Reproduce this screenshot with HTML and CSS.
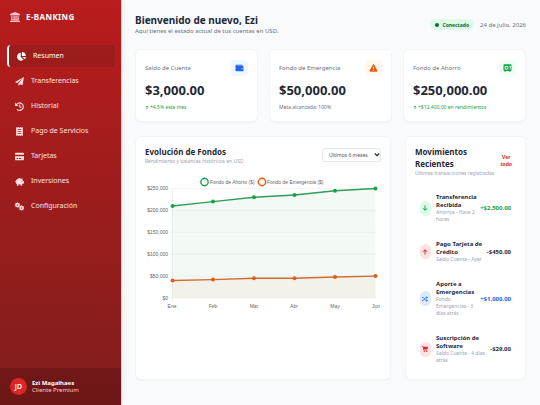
FILE: index.html
```html
<!DOCTYPE html>
<html lang="es">
<head>
<meta charset="utf-8">
<meta name="viewport" content="width=device-width, initial-scale=1">
<title>E-Banking</title>
<link rel="stylesheet" href="styles.css">
</head>
<body>
<div class="app">
  <aside class="sidebar">
    <div class="brand">
      <svg class="brand-icon" viewBox="0 0 24 24"><path d="M12 0 24 5v2.500H0V5zM3 9h3v9h2.500V9h3v9h1.500V9h3v9H18V9h3v9l1.500 1v1.500h-21V19L3 18zM0 21.500h24V24H0z"/></svg>
      <span>E-BANKING</span>
    </div>
    <nav class="nav">
      <a class="nav-link active" href="#"><svg viewBox="0 0 24 24"><path d="M10 2v11l7.500 7.500A10.500 10.500 0 1 1 10 2z"/><path d="M13 0a11 11 0 0 1 10.500 10.500H13z"/><path d="M14 13h10a11 11 0 0 1-3.500 6.500z"/></svg>Resumen</a>
      <a class="nav-link" href="#"><svg viewBox="0 0 24 24"><path d="M24 0 20 22l-7-3-4 5v-7L20 4 6 16l-6-3z"/></svg>Transferencias</a>
      <a class="nav-link" href="#"><svg viewBox="0 0 24 24"><path class="stroke" d="M3.500 7A10 10 0 1 1 5 19.500M12.500 6.500v6l4 3"/><path d="M0 1v9.500h9.500z"/></svg>Historial</a>
      <a class="nav-link" href="#"><svg viewBox="0 0 24 24"><path fill-rule="evenodd" d="M3 0l3 2 3-2 3 2 3-2 3 2 3-2v24l-3-2-3 2-3-2-3 2-3-2-3 2zM7 6v2h10V6zm0 5v2h10v-2zm0 5v2h10v-2z"/></svg>Pago de Servicios</a>
      <a class="nav-link" href="#"><svg viewBox="0 0 24 24"><path fill-rule="evenodd" d="M2 2h20a2 2 0 0 1 2 2v3H0V4a2 2 0 0 1 2-2zM0 11h24v9a2 2 0 0 1-2 2H2a2 2 0 0 1-2-2zm4 5v2.500h4V16zm6 0v2.500h7V16z"/></svg>Tarjetas</a>
      <a class="nav-link" href="#"><svg viewBox="0 0 24 24"><path fill-rule="evenodd" d="M8 5a4.500 4.500 0 0 1 8 0l4-2v5l2 3h2v6h-3l-2 2v4h-4v-3H9v3H5v-4c-2-1-3-3-3-5-1 0-2-1-2-3h2c1-4 3-6 6-6zM17 10v2h2v-2z"/></svg>Inversiones</a>
      <a class="nav-link" href="#"><svg viewBox="0 0 24 24"><circle class="gear" cx="6.500" cy="8" r="4"/><circle class="gear-teeth" cx="6.500" cy="8" r="6"/><circle class="gear" cx="17.500" cy="16" r="4"/><circle class="gear-teeth" cx="17.500" cy="16" r="6"/></svg>Configuración</a>
    </nav>
    <div class="profile">
      <span class="avatar">JD</span>
      <div><div class="profile-name">Ezi Magalhaes</div><div class="profile-plan">Cliente Premium</div></div>
    </div>
  </aside>

  <main class="main">
    <header class="page-head">
      <div><h1>Bienvenido de nuevo, Ezi</h1><p>Aquí tienes el estado actual de tus cuentas en USD.</p></div>
      <div class="head-status"><span class="pill"><i class="dot"></i>Conectado</span><time datetime="2026-07-24">24 de julio, 2026</time></div>
    </header>

    <section class="stats">
      <article class="card stat">
        <div class="stat-top"><h2>Saldo de Cuenta</h2><span class="stat-icon blue"><svg viewBox="0 0 24 24"><path fill-rule="evenodd" d="M3 2h18v3H4v1h18a2 2 0 0 1 2 2v12a2 2 0 0 1-2 2H3a3 3 0 0 1-3-3V5a3 3 0 0 1 3-3zm15 10.500v3h3v-3z"/></svg></span></div>
        <div class="amount">$3,000.00</div>
        <div class="note up"><svg viewBox="0 0 24 24"><path d="M12 23V3M4 11l8-8 8 8"/></svg>+4.5% este mes</div>
      </article>
      <article class="card stat">
        <div class="stat-top"><h2>Fondo de Emergencia</h2><span class="stat-icon orange"><svg viewBox="0 0 24 24"><path fill-rule="evenodd" d="M12 1c1 0 1.500.5 2 1.500l9.500 17c1 2-.5 3.500-2 3.500h-19C1 23-.5 21.500.5 19.500l9.500-17C10.500 1.500 11 1 12 1zm-1.500 7v7h3V8zm0 9v3h3v-3z"/></svg></span></div>
        <div class="amount">$50,000.00</div>
        <div class="note">Meta alcanzada: 100%</div>
      </article>
      <article class="card stat">
        <div class="stat-top"><h2>Fondo de Ahorro</h2><span class="stat-icon green"><svg viewBox="0 0 24 24"><path fill-rule="evenodd" d="M2 1h20a2 2 0 0 1 2 2v16a2 2 0 0 1-2 2h-1v2h-4v-2H7v2H3v-2H2a2 2 0 0 1-2-2V3a2 2 0 0 1 2-2zm7 4a6 6 0 1 0 0 12A6 6 0 0 0 9 5zm0 3a3 3 0 1 1 0 6 3 3 0 0 1 0-6zm9-3v5h1v7h2v-7h1V5z"/></svg></span></div>
        <div class="amount">$250,000.00</div>
        <div class="note up"><svg viewBox="0 0 24 24"><path d="M12 23V3M4 11l8-8 8 8"/></svg>+$12,400.00 en rendimientos</div>
      </article>
    </section>

    <section class="panels">
      <article class="card chart-card">
        <div class="panel-head">
          <div><h2>Evolución de Fondos</h2><p>Rendimiento y balances históricos en USD</p></div>
          <div class="period"><select aria-label="Periodo"><option>Últimos 6 meses</option><option>Último año</option></select><svg viewBox="0 0 8 8"><path d="M1 2l3 3 3-3"/></svg></div>
        </div>
        <svg class="chart" viewBox="0 0 236 136" role="img" aria-label="Evolución de fondos">
          <g class="grid"><path d="M24 11.500H231M24 33.400H231M24 55.300H231M24 77.200H231M24 99.100H231M24 121H231"/><path class="axis" d="M27.500 11.500V124"/></g>
          <path class="area-green" d="M27.500 29 68 24.600 109 20.300 149.500 18 190 13.700 230.500 11.500V121H27.500z"/>
          <path class="area-orange" d="M27.500 103.500 68 102.600 109 101.300H149.500L190 100 230.500 99.100V121H27.500z"/>
          <path class="line green-line" d="M27.500 29 68 24.600 109 20.300 149.500 18 190 13.700 230.500 11.500"/>
          <path class="line orange-line" d="M27.500 103.500 68 102.600 109 101.300H149.500L190 100 230.500 99.100"/>
          <g class="green-dots"><circle cx="27.500" cy="29" r="2"/><circle cx="68" cy="24.600" r="2"/><circle cx="109" cy="20.300" r="2"/><circle cx="149.500" cy="18" r="2"/><circle cx="190" cy="13.700" r="2"/><circle cx="230.500" cy="11.500" r="2"/></g>
          <g class="orange-dots"><circle cx="27.500" cy="103.500" r="2"/><circle cx="68" cy="102.600" r="2"/><circle cx="109" cy="101.300" r="2"/><circle cx="149.500" cy="101.300" r="2"/><circle cx="190" cy="100" r="2"/><circle cx="230.500" cy="99.100" r="2"/></g>
          <circle class="key key-green" cx="59.500" cy="5" r="3.700"/><circle class="key key-orange" cx="117" cy="5" r="3.700"/>
          <text x="65" y="7">Fondo de Ahorro ($)</text><text x="122" y="7">Fondo de Emergencia ($)</text>
          <g class="y-labels"><text x="23" y="13">$250,000</text><text x="23" y="35">$200,000</text><text x="23" y="57">$150,000</text><text x="23" y="79">$100,000</text><text x="23" y="101">$50,000</text><text x="23" y="123">$0</text></g>
          <g class="x-labels"><text x="27" y="131">Ene</text><text x="68" y="131">Feb</text><text x="109" y="131">Mar</text><text x="149" y="131">Abr</text><text x="190" y="131">May</text><text x="231" y="131">Jun</text></g>
        </svg>
      </article>

      <article class="card moves-card">
        <div class="panel-head">
          <div><h2>Movimientos<br>Recientes</h2><p>Últimas transacciones registradas</p></div>
          <button class="see-all" type="button">Ver<br>todo</button>
        </div>
        <ul class="moves">
          <li><span class="move-icon green"><svg viewBox="0 0 24 24"><path class="arrow" d="M12 2v19M4 13l8 8 8-8"/></svg></span><div class="move-text"><h3>Transferencia<br>Recibida</h3><p>Ahorros - Hace 2<br>horas</p></div><span class="move-sum in">+$2,500.00</span></li>
          <li><span class="move-icon red"><svg viewBox="0 0 24 24"><path class="arrow" d="M12 22V3M4 11l8-8 8 8"/></svg></span><div class="move-text"><h3>Pago Tarjeta de<br>Crédito</h3><p>Saldo Cuenta - Ayer</p></div><span class="move-sum">-$450.00</span></li>
          <li><span class="move-icon blue"><svg viewBox="0 0 24 24"><path class="arrow thin" d="M0 6h5l10 12h7M0 18h5l10-12h7M18 2l4 4-4 4M18 14l4 4-4 4"/></svg></span><div class="move-text"><h3>Aporte a<br>Emergencias</h3><p>Fondo<br>Emergencias - 3<br>días atrás</p></div><span class="move-sum transfer">+$1,000.00</span></li>
          <li><span class="move-icon red"><svg viewBox="0 0 24 24"><path d="M0 1h5l1 2h18l-3 11H8l.5 2H21v2H6L3.500 3.500H0z"/><circle cx="9" cy="21" r="2.500"/><circle cx="18.500" cy="21" r="2.500"/></svg></span><div class="move-text"><h3>Suscripción de<br>Software</h3><p>Saldo Cuenta - 4 días<br>atrás</p></div><span class="move-sum">-$29.00</span></li>
        </ul>
      </article>
    </section>
  </main>
</div>
</body>
</html>
```
FILE: styles.css
```css
* { box-sizing: border-box; }
body { margin: 0; font-family: "Noto Sans", "Liberation Sans", sans-serif; font-size: 6px; line-height: 8px; color: #1f2937; background: #f8fafc; }
h1, h2, h3, p, ul { margin: 0; padding: 0; }
svg { display: block; flex: none; fill: currentColor; }

.app { display: flex; min-height: 100vh; }

.sidebar { flex: none; width: 122px; display: flex; flex-direction: column; color: #fff; background: linear-gradient(#b91c1c, #7f1d1d); border-right: 1px solid #e5c5c8; box-shadow: 0 0 6px rgba(0, 0, 0, .08); }
.brand { display: flex; align-items: center; gap: 6px; height: 34px; padding: 0 10px; font-size: 8px; font-weight: 700; letter-spacing: 0.05em; }
.brand-icon { width: 10px; height: 10px; color: #fecaca; }
.nav { display: flex; flex-direction: column; gap: 3px; padding: 11px 6px 0 7px; }
.nav-link { display: flex; align-items: center; gap: 7px; height: 22px; padding: 0 8px; border-radius: 4px; font-size: 7px; color: #fee2e2; text-decoration: none; }
.nav-link svg { width: 9px; height: 9px; }
.nav-link.active { color: #fff; background: rgba(127, 29, 29, .4); border-left: 2px solid #fff; }
.stroke { fill: none; stroke: currentColor; stroke-width: 3; }
.gear { fill: none; stroke: currentColor; stroke-width: 4; }
.gear-teeth { fill: none; stroke: currentColor; stroke-width: 2; stroke-dasharray: 3 3; }
.profile { margin-top: auto; display: flex; align-items: center; gap: 5px; height: 37px; padding: 0 10px; background: rgba(69, 10, 10, .3); }
.avatar { width: 17px; height: 17px; border-radius: 50%; background: #dc2626; font-size: 7px; line-height: 17px; text-align: center; font-weight: 600; }
.profile-name { font-weight: 700; }
.profile-plan { line-height: 7px; color: #fecaca; }

.main { flex: 1; min-width: 0; padding: 14px 14px 14px 13px; }
.page-head { display: flex; align-items: center; justify-content: space-between; margin-bottom: 14px; }
.page-head h1 { font-size: 10px; line-height: 13px; font-weight: 700; }
.page-head p { color: #6b7280; }
.head-status { display: flex; align-items: center; gap: 6px; color: #6b7280; }
.pill { display: flex; align-items: center; gap: 3px; height: 11px; padding: 0 5px; border-radius: 6px; background: #dcfce7; color: #166534; font-size: 5px; font-weight: 700; }
.dot { width: 4px; height: 4px; border-radius: 50%; background: #166534; }

.card { background: #fff; border: 1px solid #f3f4f6; border-radius: 6px; box-shadow: 0 1px 1px rgba(0, 0, 0, .03); }
.stats { display: grid; grid-template-columns: repeat(3, 1fr); gap: 11px; margin-bottom: 14px; }
.stat { padding: 10px 9px; }
.stat-top { display: flex; align-items: center; justify-content: space-between; margin-bottom: 6px; }
.stat-top h2 { font-size: 6px; font-weight: 400; color: #6b7280; }
.stat-icon { display: grid; place-items: center; width: 17px; height: 16px; border-radius: 4px; }
.stat-icon svg { width: 9px; height: 8px; }
.stat-icon.blue { color: #2563eb; background: #eff6ff; }
.stat-icon.orange { color: #ea580c; background: #fff7ed; }
.stat-icon.green { color: #16a34a; background: #f0fdf4; }
.amount { font-size: 13px; line-height: 17px; font-weight: 700; margin-bottom: 5px; }
.note { display: flex; align-items: center; gap: 1px; font-size: 5px; line-height: 7px; color: #6b7280; }
.note svg { width: 4px; height: 5px; fill: none; stroke: currentColor; stroke-width: 4; }
.note.up { color: #16a34a; }

/* the chart spans two of three equal columns */
.panels { display: grid; grid-template-columns: calc((100% - 28px) / 3 * 2 + 14px) 1fr; gap: 14px; }
.chart-card, .moves-card { min-width: 0; padding: 9px; }
.panel-head { display: flex; align-items: center; justify-content: space-between; }
.panel-head h2 { font-size: 8px; line-height: 12px; font-weight: 700; }
.panel-head p { font-size: 5px; line-height: 6px; color: #9ca3af; white-space: nowrap; }
.period { position: relative; }
.period select { display: block; appearance: none; width: 59px; height: 14px; padding: 0 6px; border: 1px solid #e5e7eb; border-radius: 3px; background: #fff; color: #4b5563; font: 5px/12px "Noto Sans", sans-serif; }
.period svg { position: absolute; right: 1px; top: 4px; width: 6px; height: 6px; fill: none; stroke: #1f2937; stroke-width: 1.5; pointer-events: none; }

.chart { width: 100%; margin-top: 13px; font-family: "Liberation Sans", sans-serif; font-size: 5px; fill: #666; }
.grid path { fill: none; stroke: #ececec; stroke-width: .5; }
.grid .axis { stroke: #ddd; }
.area-green { fill: rgba(22, 163, 74, .05); }
.area-orange { fill: rgba(234, 88, 12, .05); }
.line { fill: none; stroke-width: 1.4; }
.green-line { stroke: #2f9e59; }
.orange-line { stroke: #d26a2e; }
.green-dots { fill: #16a34a; }
.orange-dots { fill: #dc5f1c; }
.key { stroke-width: 1.4; }
.key-green { fill: #f3faf6; stroke: #16a34a; }
.key-orange { fill: #fef5f0; stroke: #ea580c; }
.y-labels { text-anchor: end; }
.x-labels { text-anchor: middle; }

.see-all { flex: none; margin-right: 4px; padding: 0; border: 0; background: none; color: #dc2626; font: 700 5px/7px "Noto Sans", sans-serif; text-align: center; }
.moves { list-style: none; display: flex; flex-direction: column; gap: 17px; padding: 17px 5px 6px; }
.moves li { display: flex; align-items: center; }
.move-icon { flex: none; display: grid; place-items: center; width: 11px; height: 15px; margin-right: 5px; border-radius: 6px; }
.move-icon svg { width: 6px; height: 6px; }
.move-icon.green { color: #16a34a; background: #dcfce7; }
.move-icon.red { color: #dc2626; background: #fee2e2; }
.move-icon.blue { color: #2563eb; background: #dbeafe; }
.arrow { fill: none; stroke: currentColor; stroke-width: 4; }
.arrow.thin { stroke-width: 3; }
.move-text { flex: 1; min-width: 0; white-space: nowrap; }
.move-text h3 { font-size: 6px; line-height: 8px; font-weight: 700; }
.move-text p { font-size: 5px; line-height: 7px; color: #9ca3af; }
.move-sum { font-weight: 700; }
.move-sum.in { color: #16a34a; }
.move-sum.transfer { color: #2563eb; }
```
